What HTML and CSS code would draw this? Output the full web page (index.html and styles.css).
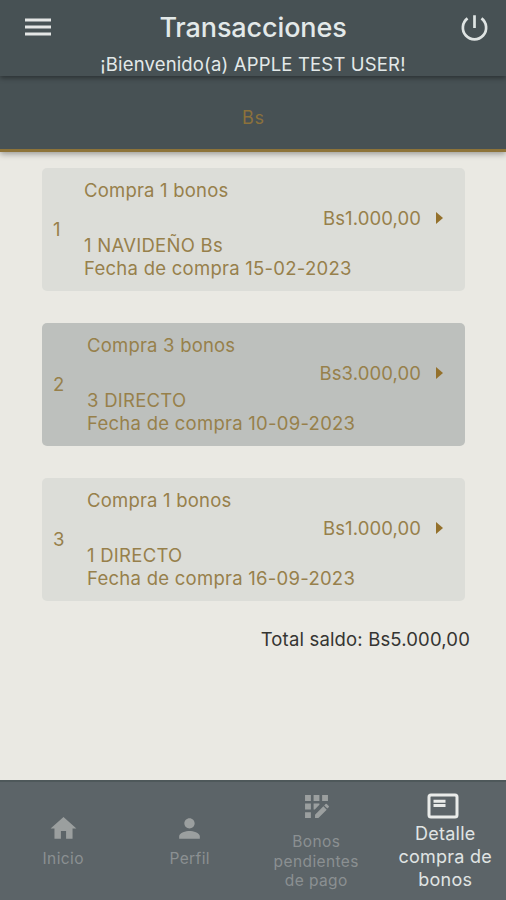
FILE: index.html
```html
<!DOCTYPE html>
<html lang="es">
<head>
<meta charset="utf-8">
<title>Transacciones</title>
<link rel="stylesheet" href="styles.css">
</head>
<body>
<div class="app">
  <header class="header">
    <div class="toolbar">
      <svg class="menu-icon" viewBox="0 0 26 18"><path d="M0 2h26M0 9h26M0 16h26"/></svg>
      <h1 class="title"><span>Transacciones</span></h1>
      <svg class="power-icon" viewBox="0 0 26 26"><path d="M13 1.3V13.5M6.3 4.2A11.2 11.2 0 1 0 19.7 4.2"/></svg>
    </div>
    <p class="welcome"><span>¡Bienvenido(a) APPLE TEST USER!</span></p>
  </header>
  <nav class="tabs"><span>Bs</span></nav>
  <main class="content">
    <article class="card first">
      <span class="number">1</span>
      <div class="details">
        <p class="name"><span>Compra 1 bonos</span></p>
        <p class="amount"><span>Bs1.000,00</span><svg class="arrow" viewBox="0 0 7 12"><path d="M0 0l7 6-7 6z"/></svg></p>
        <p class="kind"><span>1 NAVIDEÑO Bs</span></p>
        <p class="date"><span>Fecha de compra 15-02-2023</span></p>
      </div>
    </article>
    <article class="card dark">
      <span class="number">2</span>
      <div class="details">
        <p class="name"><span>Compra 3 bonos</span></p>
        <p class="amount"><span>Bs3.000,00</span><svg class="arrow" viewBox="0 0 7 12"><path d="M0 0l7 6-7 6z"/></svg></p>
        <p class="kind"><span>3 DIRECTO</span></p>
        <p class="date"><span>Fecha de compra 10-09-2023</span></p>
      </div>
    </article>
    <article class="card">
      <span class="number">3</span>
      <div class="details">
        <p class="name"><span>Compra 1 bonos</span></p>
        <p class="amount"><span>Bs1.000,00</span><svg class="arrow" viewBox="0 0 7 12"><path d="M0 0l7 6-7 6z"/></svg></p>
        <p class="kind"><span>1 DIRECTO</span></p>
        <p class="date"><span>Fecha de compra 16-09-2023</span></p>
      </div>
    </article>
    <p class="total"><span>Total saldo: Bs5.000,00</span></p>
  </main>
  <footer class="bottom-nav">
    <a class="item">
      <svg class="icon" viewBox="0 0 24 24"><path d="M10 20v-6h4v6h5v-8h3L12 3 2 12h3v8z"/></svg>
      <span>Inicio</span>
    </a>
    <a class="item">
      <svg class="icon" viewBox="0 0 24 24"><path d="M12 12c2.21 0 4-1.79 4-4s-1.79-4-4-4-4 1.79-4 4 1.79 4 4 4zm0 2c-2.67 0-8 1.34-8 4v2h16v-2c0-2.66-5.33-4-8-4z"/></svg>
      <span>Perfil</span>
    </a>
    <a class="item tall">
      <svg class="icon grid" viewBox="0 0 24 24"><path d="M1 1h5.6v5.6H1zM9.2 1h5.6v5.6H9.2zM17.4 1H23v5.6h-5.6zM1 9.2h5.6v5.6H1zM9.2 9.2h5.6v1.2l-4.4 4.4H9.2zM1 17.4h5.6V23H1zM10.6 23v-3.2l8-8 3.2 3.2-8 8zM19.4 11l1.3-1.3q.6-.6 1.2 0l1.8 1.8q.6.6 0 1.2l-1.3 1.3z"/></svg>
      <span>Bonos<br>pendientes<br>de pago</span>
    </a>
    <a class="item active">
      <svg class="detail-icon" viewBox="0 0 32 26"><rect class="frame" x="2" y="2" width="28" height="22" rx="2"/><path d="M6.5 8.2h12M6.5 12.6h12"/></svg>
      <span>Detalle<br>compra de<br>bonos</span>
    </a>
  </footer>
</div>
</body>
</html>
```

FILE: styles.css
```css
* { box-sizing: border-box; }
body { margin: 0; font-family: Inter, "Liberation Sans", sans-serif; }
p, h1 { margin: 0; font-weight: 400; white-space: nowrap; }
svg { display: block; flex: none; }
.app { width: 506px; height: 900px; display: flex; flex-direction: column; background: #eae9e3; overflow: hidden; }
.header { height: 76px; background: #475154; color: #e3e9e9; position: relative; z-index: 2; box-shadow: 0 2px 5px rgba(0,0,0,.4); }
.toolbar { height: 54px; display: flex; align-items: center; justify-content: space-between; padding: 0 18px 0 25px; }
.menu-icon { width: 26px; height: 18px; fill: none; stroke: #e4e6e5; stroke-width: 3; }
.power-icon { width: 27px; height: 27px; fill: none; stroke: #dfe4e3; stroke-width: 2.6; }
.title { font-size: 27px; line-height: 54px; font-weight: 500; letter-spacing: -.12px; padding-right: 6px; padding-top: 1px; }
.welcome { text-align: center; font-size: 18.5px; line-height: 22px; letter-spacing: .16px; margin-top: -1px; }
.tabs { height: 76px; flex: none; display: flex; align-items: center; justify-content: center; padding: 9px 0 0 1px; background: #475154; border-bottom: 3px solid #8d7339; color: #8c713b; font-size: 18px; letter-spacing: .8px; box-shadow: 0 2px 6px rgba(0,0,0,.35); }
.content { flex: 1; padding: 16px 36px 0 42px; display: flex; flex-direction: column; }
.card { width: 423px; height: 123px; margin-bottom: 32px; padding-left: 11px; border-radius: 5px; background: #dcddd8; color: #97804b; display: flex; align-items: center; font-size: 18.5px; letter-spacing: .26px; }
.dark { background: #bdc0bd; }
.number { width: 34px; margin-top: -2px; }
.first .number { width: 31px; }
.details { flex: 1; height: 123px; padding-top: 10px; line-height: 24px; }
.name { letter-spacing: .2px; }
.amount { display: flex; align-items: center; justify-content: flex-end; gap: 15px; padding-right: 22px; height: 24px; margin: 4px 0; letter-spacing: .1px; }
.arrow { width: 7px; height: 12px; fill: #94712c; }
.kind, .date { line-height: 23px; }
.total { align-self: flex-end; color: #353532; font-size: 18.5px; line-height: 24px; letter-spacing: .16px; margin-top: -6px; }
.bottom-nav { height: 120px; flex: none; display: grid; grid-template-columns: repeat(4, 1fr); background: #5c6468; color: #8b9092; border-top: 2px solid #4e585a; }
.item { display: flex; flex-direction: column; align-items: center; text-align: center; padding-top: 31px; font-size: 15.5px; line-height: 19.5px; letter-spacing: .4px; }
.icon { width: 31px; height: 31px; fill: #9b9f9f; margin-bottom: 5px; }
.tall { padding-top: 12px; }
.grid { width: 25px; height: 25px; margin-bottom: 13px; }
.active { padding-top: 11px; color: #e0e4e4; font-size: 18px; line-height: 23px; letter-spacing: .25px; }
.active span { padding-left: 5px; }
.detail-icon { width: 32px; height: 26px; fill: none; stroke: #e9ebe9; stroke-width: 3; margin-bottom: 3px; }
```
